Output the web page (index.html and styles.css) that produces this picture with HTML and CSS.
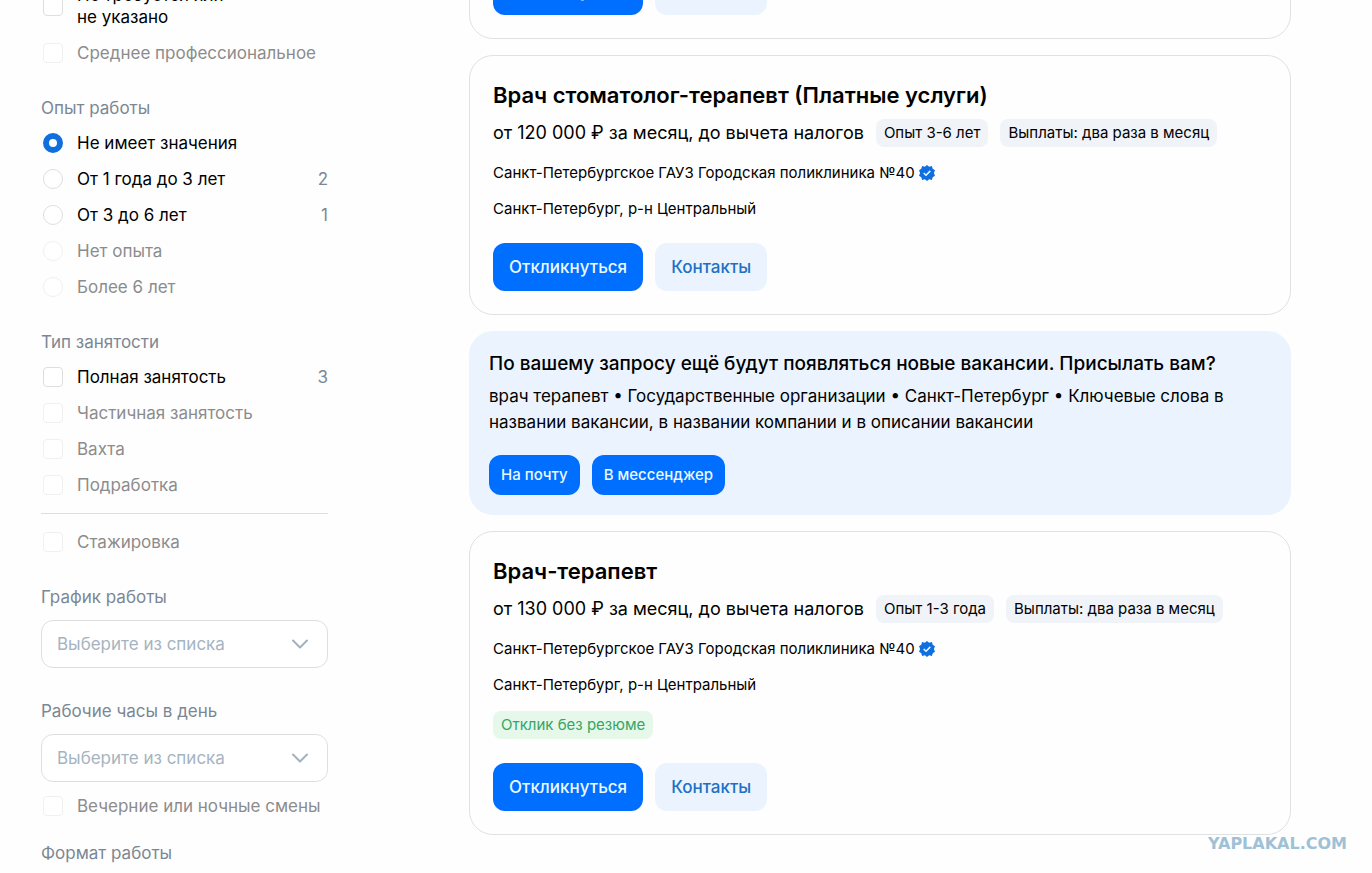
FILE: index.html
```html
<!DOCTYPE html>
<html lang="ru">
<head>
  <meta charset="UTF-8" />
  <meta name="viewport" content="width=device-width, initial-scale=1" />
  <title>Вакансии</title>
  <link rel="stylesheet" href="styles.css">
</head>
<body>

<svg width="0" height="0" class="sprite" aria-hidden="true">
  <symbol id="verified" viewBox="0 0 16 16">
    <path fill="#0f6fe0" d="M8 0l2.1 1.7 2.8-.6.8 2.7 2.3 1.5L14.9 8l1.1 2.7-2.3 1.5-.8 2.7-2.8-.6L8 16l-2.1-1.7-2.8.6-.8-2.7L0 10.700 1.100 8 0 5.300l2.300-1.500.8-2.700 2.800.6z"/>
    <path fill="none" stroke="#e8f8ff" stroke-width="1.5" d="M4.700 8l2.300 2.200 4.300-4.300"/>
  </symbol>
  <symbol id="chevron" viewBox="0 0 16 10">
    <path fill="none" stroke="#a3b1bd" stroke-width="2" stroke-linecap="round" stroke-linejoin="round" d="M1 1.500l7 7 7-7"/>
  </symbol>
</svg>

<div class="page">
  <aside class="filters">
    <div class="group">
      <label class="row"><input type="checkbox"><span>Не требуется или<br>не указано</span></label>
      <label class="row"><input type="checkbox" disabled><span>Среднее профессиональное</span></label>
    </div>

    <div class="group">
      <div class="group-title">Опыт работы</div>
      <label class="row"><input type="radio" name="exp" checked><span>Не имеет значения</span></label>
      <label class="row"><input type="radio" name="exp"><span>От 1 года до 3 лет</span><span class="count">2</span></label>
      <label class="row"><input type="radio" name="exp"><span>От 3 до 6 лет</span><span class="count">1</span></label>
      <label class="row"><input type="radio" name="exp" disabled><span>Нет опыта</span></label>
      <label class="row"><input type="radio" name="exp" disabled><span>Более 6 лет</span></label>
    </div>

    <div class="group">
      <div class="group-title">Тип занятости</div>
      <label class="row"><input type="checkbox"><span>Полная занятость</span><span class="count">3</span></label>
      <label class="row"><input type="checkbox" disabled><span>Частичная занятость</span></label>
      <label class="row"><input type="checkbox" disabled><span>Вахта</span></label>
      <label class="row"><input type="checkbox" disabled><span>Подработка</span></label>
      <hr>
      <label class="row"><input type="checkbox" disabled><span>Стажировка</span></label>
    </div>

    <div class="group group-select">
      <label class="group-title" for="schedule">График работы</label>
      <div class="select">
        <select id="schedule"><option>Выберите из списка</option></select>
        <svg class="chevron"><use href="#chevron"/></svg>
      </div>
    </div>

    <div class="group group-hours">
      <label class="group-title" for="hours">Рабочие часы в день</label>
      <div class="select">
        <select id="hours"><option>Выберите из списка</option></select>
        <svg class="chevron"><use href="#chevron"/></svg>
      </div>
      <label class="row"><input type="checkbox" disabled><span>Вечерние или ночные смены</span></label>
    </div>

    <div class="group-title">Формат работы</div>
  </aside>

  <main class="results">
    <article class="card">
      <div class="actions">
        <button class="btn">Откликнуться</button>
        <button class="btn btn-light">Контакты</button>
      </div>
    </article>

    <article class="card">
      <h2>Врач стоматолог-терапевт (Платные услуги)</h2>
      <div class="salary">
        <span class="sum">от 120 000 ₽ за месяц, до вычета налогов</span>
        <span class="tag">Опыт 3-6 лет</span>
        <span class="tag">Выплаты: два раза в месяц</span>
      </div>
      <div class="line">Санкт-Петербургское ГАУЗ Городская поликлиника №40 <svg class="verified"><use href="#verified"/></svg></div>
      <div class="line">Санкт-Петербург, р-н Центральный</div>
      <div class="actions">
        <button class="btn">Откликнуться</button>
        <button class="btn btn-light">Контакты</button>
      </div>
    </article>

    <section class="subscribe">
      <h3>По вашему запросу ещё будут появляться новые вакансии. Присылать вам?</h3>
      <p>врач терапевт • Государственные организации • Санкт-Петербург • Ключевые слова в названии вакансии, в названии компании и в описании вакансии</p>
      <div class="subscribe-actions">
        <button class="btn btn-small">На почту</button>
        <button class="btn btn-small">В мессенджер</button>
      </div>
    </section>

    <article class="card">
      <h2>Врач-терапевт</h2>
      <div class="salary">
        <span class="sum">от 130 000 ₽ за месяц, до вычета налогов</span>
        <span class="tag">Опыт 1-3 года</span>
        <span class="tag">Выплаты: два раза в месяц</span>
      </div>
      <div class="line">Санкт-Петербургское ГАУЗ Городская поликлиника №40 <svg class="verified"><use href="#verified"/></svg></div>
      <div class="line">Санкт-Петербург, р-н Центральный</div>
      <div class="labels"><span class="tag tag-green">Отклик без резюме</span></div>
      <div class="actions">
        <button class="btn">Откликнуться</button>
        <button class="btn btn-light">Контакты</button>
      </div>
    </article>
  </main>
</div>

<div class="watermark">YAPLAKAL.COM</div>

</body>
</html>
```
FILE: styles.css
```css
* {
  box-sizing: border-box;
}

body {
  margin: 0;
  background: #fefefe;
  color: #000;
  font-family: Inter, "Liberation Sans", sans-serif;
  font-size: 17px;
  line-height: 22px;
}

.sprite {
  position: absolute;
}

/* the list is scrolled down a little */
.page {
  display: grid;
  grid-template-columns: 287px 1fr;
  column-gap: 141px;
  margin-top: -57px;
  padding: 0 81px 0 41px;
}

/* filters */
.filters {
  padding-top: 34px;
}

.group {
  margin-bottom: 26px;
}

.group-select {
  margin-bottom: 32px;
}

.group-hours {
  margin-bottom: 18px;
}

.group-title {
  display: block;
  margin-bottom: 6px;
  color: #7b8794;
}

.row {
  display: flex;
  align-items: center;
  padding: 7px 0 7px 2px;
}

.row input {
  appearance: none;
  flex: none;
  width: 20px;
  height: 20px;
  margin: 0 14px 0 0;
  border: 1px solid #dcdfe2;
  border-radius: 4px;
  background: #fff;
}

.row input[type="radio"] {
  border-radius: 50%;
}

.row input[type="radio"]:checked {
  border: 6px solid #0f6fe0;
}

.row input:disabled {
  border-color: #f0f0f2;
}

.row input:disabled + span {
  color: #8c8c8c;
}

.row .count {
  margin-left: auto;
  color: #7b8794;
}

hr {
  margin: 10px 0;
  border: 0;
  border-top: 1px solid #dcdfe2;
}

.select {
  position: relative;
  margin: 12px 0 6px;
}

.select select {
  appearance: none;
  display: block;
  width: 100%;
  height: 48px;
  padding: 0 48px 0 15px;
  border: 1px solid #dcdfe2;
  border-radius: 12px;
  background: #fff;
  color: #a5b4c0;
  font: inherit;
}

.chevron {
  position: absolute;
  top: 19px;
  right: 20px;
  width: 16px;
  height: 10px;
  pointer-events: none;
}

/* vacancies */
.results {
  display: flex;
  flex-direction: column;
  gap: 16px;
}

.card {
  padding: 23px;
  border: 1px solid #dfe1e4;
  border-radius: 24px;
}

h2 {
  margin: 0 0 8px;
  font-size: 22px;
  line-height: 32px;
  font-weight: 600;
}

.salary {
  display: flex;
  align-items: center;
  flex-wrap: wrap;
  gap: 12px;
}

.sum {
  font-size: 18px;
}

.tag {
  padding: 0 8px;
  border-radius: 8px;
  background: #f0f3f8;
  font-size: 15px;
  line-height: 28px;
}

.tag-green {
  background: #e6f8ea;
  color: #35a564;
}

.line {
  display: flex;
  align-items: center;
  gap: 4px;
  margin-top: 16px;
  font-size: 15px;
  line-height: 20px;
}

.verified {
  width: 16px;
  height: 16px;
}

.labels {
  display: flex;
  margin-top: 16px;
}

.actions {
  display: flex;
  gap: 12px;
}

* + .actions {
  margin-top: 24px;
}

.btn {
  height: 48px;
  padding: 0 16px;
  border: 0;
  border-radius: 12px;
  background: #006fff;
  color: #e9f9ff;
  font: inherit;
  font-weight: 500;
  cursor: pointer;
}

.btn-light {
  background: #ebf4fe;
  color: #2070c4;
}

.btn-small {
  height: 40px;
  padding: 0 12px;
  font-size: 15px;
}

.subscribe {
  padding: 20px;
  border-radius: 24px;
  background: #ebf4fe;
}

.subscribe h3 {
  margin: 0 0 6px;
  font-size: 19px;
  line-height: 26px;
  font-weight: 500;
}

.subscribe p {
  margin: 0 0 20px;
  line-height: 26px;
}

.subscribe-actions {
  display: flex;
  gap: 12px;
}

.watermark {
  position: absolute;
  top: 834px;
  right: 25px;
  color: #9fc1d6;
  font-family: "DejaVu Sans", sans-serif;
  font-size: 16px;
  line-height: 20px;
  font-weight: 700;
}
```
